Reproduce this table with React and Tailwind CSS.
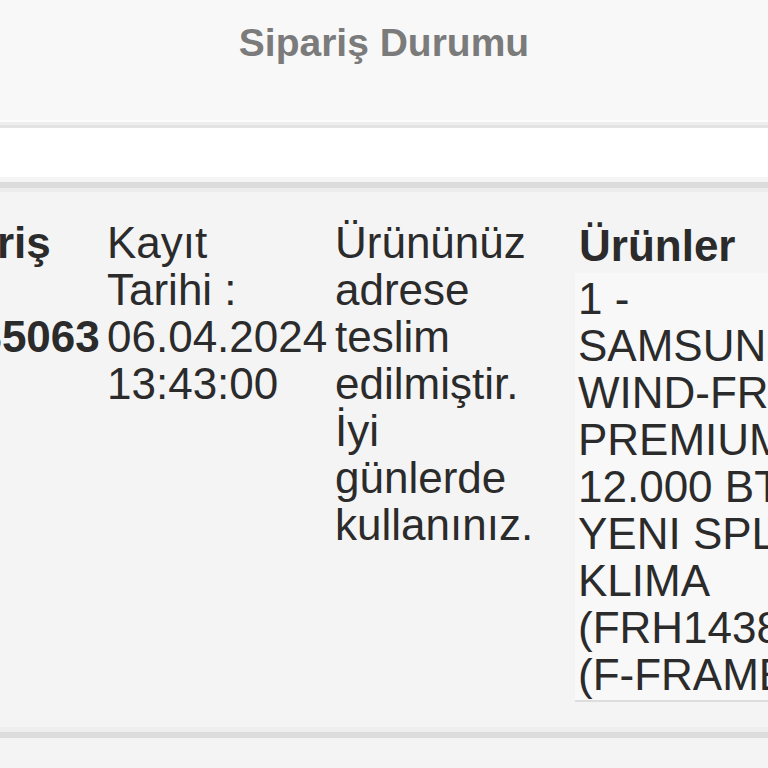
import React from 'react';

const urunLines = [
    '1 -',
    'SAMSUNG',
    'WIND-FREE',
    'PREMIUM',
    '12.000 BTU',
    'YENI SPLIT',
    'KLIMA',
    '(FRH14380)',
    '(F-FRAME)',
];

function Lines({ items }) {
    return items.map((t) => (
        <div key={t} className="whitespace-nowrap">
            {t}
        </div>
    ));
}

function App() {
    return (
        <div className="h-screen overflow-hidden bg-[#f4f4f4] font-['Liberation_Sans',Arial,sans-serif]">
            {/* header */}
            <div className="h-[120px] bg-[#f8f8f8] flex justify-center pt-[20px]">
                <h1 className="text-[39px] leading-[45px] font-bold text-[#7b7b7b]">
                    Sipariş Durumu
                </h1>
            </div>
            <div className="h-[2px] bg-[#fcfcfc]"></div>
            <div className="h-[3px] bg-[#eeeeee]"></div>
            <div className="h-[3px] bg-[#e3e3e3]"></div>
            <div className="h-[49px] bg-white"></div>
            <div className="h-[5px] bg-[#f5f5f5]"></div>
            <div className="h-[6px] bg-[#dcdcdc]"></div>
            <div className="h-[4px] bg-[#ececec]"></div>

            {/* order row: the view is scrolled, so the first and last columns are cut */}
            <div className="flex items-start pt-[27px] pb-[25px] text-[44px] leading-[47px] text-[#2b2b2b] -ml-[96px] w-[1100px]">
                <div className="w-[199px] shrink-0 font-bold">
                    <Lines items={['Sipariş', 'No :', '24035063']} />
                </div>
                <div className="w-[228px] shrink-0 pl-[4px]">
                    <Lines items={['Kayıt', 'Tarihi :', '06.04.2024', '13:43:00']} />
                </div>
                <div className="w-[244px] shrink-0 pl-[4px]">
                    <Lines
                        items={[
                            'Ürününüz',
                            'adrese',
                            'teslim',
                            'edilmiştir.',
                            'İyi',
                            'günlerde',
                            'kullanınız.',
                        ]}
                    />
                </div>
                <div className="w-[290px] shrink-0 pt-[3px]">
                    <div className="font-bold pl-[4px]">Ürünler</div>
                    <div className="mt-[4px] bg-[#f8f8f8] border-b-2 border-[#dddddd] pl-[3px] pt-[2px] pb-[2px]">
                        <Lines items={urunLines} />
                    </div>
                </div>
            </div>

            <div className="h-[5px] bg-[#eeeeee]"></div>
            <div className="h-[6px] bg-[#dcdcdc]"></div>
        </div>
    );
}

export default App;
